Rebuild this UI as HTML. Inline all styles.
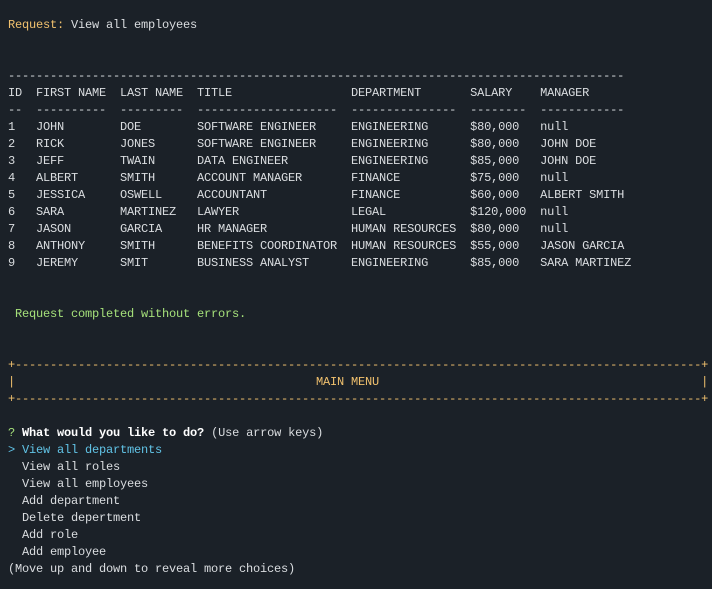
<!DOCTYPE html>
<html><head><meta charset="utf-8"><style>
html,body{margin:0;padding:0;background:#1b2128;width:712px;height:589px;overflow:hidden}
pre{margin:0;padding:16.5px 0 0 8px;font-family:"Liberation Mono",monospace;font-size:12px;letter-spacing:-0.2px;line-height:17px;color:#dadde0}
.y{color:#f1c16e}.g{color:#a5e07a}.c{color:#61c3e6}.b{font-weight:bold;color:#fff}
</style></head><body><pre><span class="y">Request:</span> View all employees


----------------------------------------------------------------------------------------
ID  FIRST NAME  LAST NAME  TITLE                 DEPARTMENT       SALARY    MANAGER
--  ----------  ---------  --------------------  ---------------  --------  ------------
1   JOHN        DOE        SOFTWARE ENGINEER     ENGINEERING      $80,000   null
2   RICK        JONES      SOFTWARE ENGINEER     ENGINEERING      $80,000   JOHN DOE
3   JEFF        TWAIN      DATA ENGINEER         ENGINEERING      $85,000   JOHN DOE
4   ALBERT      SMITH      ACCOUNT MANAGER       FINANCE          $75,000   null
5   JESSICA     OSWELL     ACCOUNTANT            FINANCE          $60,000   ALBERT SMITH
6   SARA        MARTINEZ   LAWYER                LEGAL            $120,000  null
7   JASON       GARCIA     HR MANAGER            HUMAN RESOURCES  $80,000   null
8   ANTHONY     SMITH      BENEFITS COORDINATOR  HUMAN RESOURCES  $55,000   JASON GARCIA
9   JEREMY      SMIT       BUSINESS ANALYST      ENGINEERING      $85,000   SARA MARTINEZ


<span class="g"> Request completed without errors.</span>


<span class="y">+--------------------------------------------------------------------------------------------------+
|                                           MAIN MENU                                              |
+--------------------------------------------------------------------------------------------------+</span>

<span class="g">?</span> <span class="b">What would you like to do?</span> (Use arrow keys)
<span class="c">&gt; View all departments</span>
  View all roles
  View all employees
  Add department
  Delete depertment
  Add role
  Add employee
(Move up and down to reveal more choices)</pre></body></html>
